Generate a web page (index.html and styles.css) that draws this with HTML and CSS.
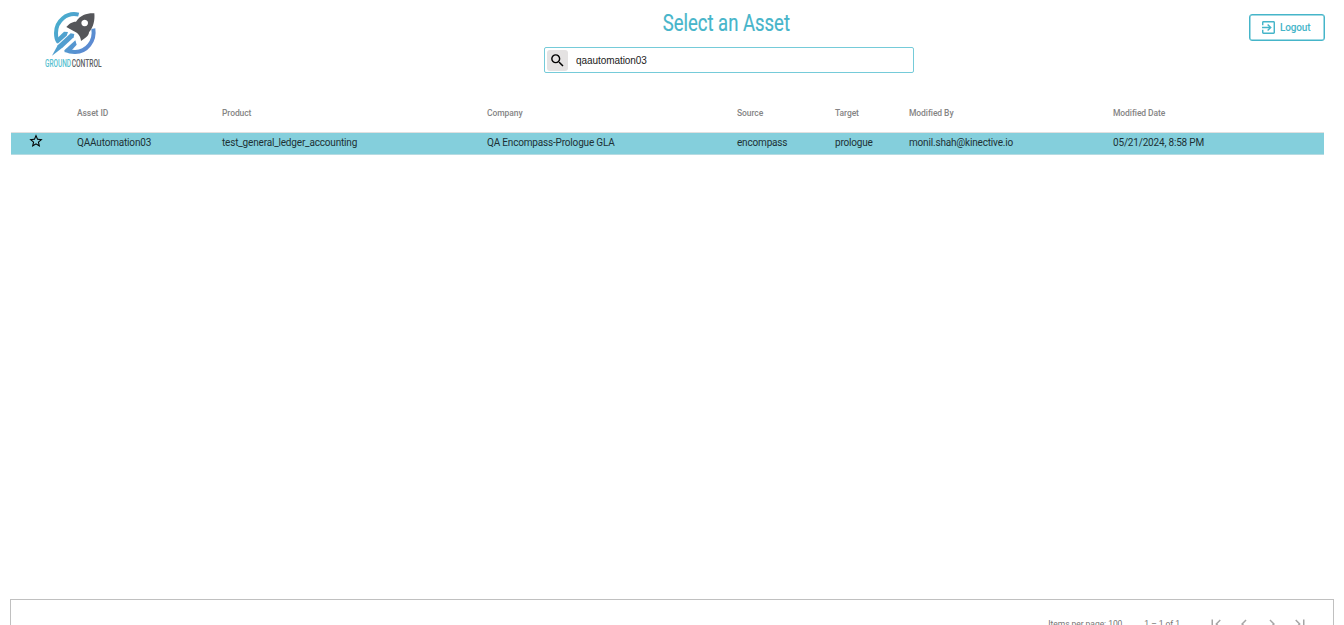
FILE: index.html
```html
<!DOCTYPE html>
<html lang="en">
<head>
  <meta charset="UTF-8" />
  <meta name="viewport" content="width=device-width, initial-scale=1.0"/>
  <title>Ground Control - Select an Asset</title>
  <link rel="stylesheet" href="styles.css">
</head>
<body>
  <div class="page">
    <header class="header">
      <div class="header-side">
        <svg class="logo" viewBox="0 0 240 210" role="img" aria-label="Ground Control">
          <defs>
            <linearGradient id="ring" gradientUnits="userSpaceOnUse" x1="60" y1="50" x2="175" y2="130">
              <stop offset="0" stop-color="#48aecd"/>
              <stop offset="1" stop-color="#5e86d2"/>
            </linearGradient>
          </defs>
          <!-- ring -->
          <g fill="none" stroke="url(#ring)" stroke-width="12">
            <path d="M131 29 C96 20 63 48 63 84 C63 96 65 105 70 111"/>
            <path d="M175 71 C181 108 155 142 119 141 C107 141 99 139 93 136"/>
          </g>
          <!-- trails -->
          <g fill="url(#ring)">
            <path d="M87 80 L99 81 L95 92 L68 116 L62 104 Z"/>
            <path d="M107 85 L118 87 L116 97 L84 127 L51 152 L68 121 Z"/>
            <path d="M121 106 L125 119 L106 140 L89 142 L88 136 Z"/>
          </g>
          <!-- rocket -->
          <path fill="#55565a" fill-rule="evenodd" d="M178 25 C180 45 176 66 162 82 C162 93 149 101 138 108 C137 94 129 84 117 79 L94 66 C102 57 110 50 123 50 C137 29 157 24 178 25 Z M149 44 a10 10 0 1 0 0.1 0 Z"/>
          <text class="logo-ground" x="30" y="186" textLength="78" lengthAdjust="spacingAndGlyphs">GROUND</text>
          <text class="logo-control" x="110" y="186" textLength="90" lengthAdjust="spacingAndGlyphs">CONTROL</text>
        </svg>
      </div>

      <div class="header-main">
        <h1 class="title">Select an Asset</h1>
        <div class="search">
          <button class="search-button" aria-label="Search">
            <svg viewBox="0 0 24 24"><path d="M15.5 14h-.79l-.28-.27A6.47 6.47 0 0 0 16 9.5 6.5 6.5 0 1 0 9.5 16c1.61 0 3.09-.59 4.23-1.57l.27.28v.79l5 4.99L20.49 19l-4.99-5zm-6 0C7.01 14 5 11.99 5 9.5S7.01 5 9.5 5 14 7.01 14 9.5 11.99 14 9.5 14z"/></svg>
          </button>
          <input class="search-input" type="text" value="qaautomation03" aria-label="Search assets" />
        </div>
      </div>

      <div class="header-side header-right">
        <button class="logout">
          <svg viewBox="3 3 18 18"><path d="M10.09 15.59L11.5 17l5-5-5-5-1.41 1.41L12.67 11H3v2h9.67l-2.58 2.59zM19 3H5a2 2 0 0 0-2 2v4h2V5h14v14H5v-4H3v4a2 2 0 0 0 2 2h14c1.1 0 2-.9 2-2V5c0-1.1-.9-2-2-2z"/></svg>
          <span>Logout</span>
        </button>
      </div>
    </header>

    <table class="assets">
      <colgroup>
        <col class="col-star"><col class="col-id"><col class="col-product"><col class="col-company">
        <col class="col-source"><col class="col-target"><col class="col-by"><col class="col-date">
      </colgroup>
      <thead>
        <tr>
          <th></th>
          <th>Asset ID</th>
          <th>Product</th>
          <th>Company</th>
          <th>Source</th>
          <th>Target</th>
          <th>Modified By</th>
          <th>Modified Date</th>
        </tr>
      </thead>
      <tbody>
        <tr>
          <td class="star"><svg viewBox="0 0 24 24"><path d="M22 9.24l-7.19-.62L12 2 9.19 8.63 2 9.24l5.46 4.73L5.82 21 12 17.27 18.18 21l-1.63-7.03L22 9.24zM12 15.4l-3.76 2.27 1-4.28-3.32-2.88 4.38-.38L12 6.1l1.71 4.04 4.38.38-3.32 2.88 1 4.28L12 15.4z"/></svg></td>
          <td>QAAutomation03</td>
          <td>test_general_ledger_accounting</td>
          <td>QA Encompass-Prologue GLA</td>
          <td>encompass</td>
          <td>prologue</td>
          <td>monil.shah@kinective.io</td>
          <td>05/21/2024, 8:58 PM</td>
        </tr>
      </tbody>
    </table>

    <footer class="paginator">
      <span class="page-size">Items per page: 100</span>
      <span class="page-range">1 – 1 of 1</span>
      <div class="page-buttons">
        <svg viewBox="0 0 24 24"><path d="M18.41 16.59L13.82 12l4.59-4.59L17 6l-6 6 6 6zM6 6h2v12H6z"/></svg>
        <svg viewBox="0 0 24 24"><path d="M15.41 7.41L14 6l-6 6 6 6 1.41-1.41L10.83 12z"/></svg>
        <svg viewBox="0 0 24 24"><path d="M10 6L8.59 7.41 13.17 12l-4.58 4.59L10 18l6-6z"/></svg>
        <svg viewBox="0 0 24 24"><path d="M5.59 7.41L10.18 12l-4.59 4.59L7 18l6-6-6-6zM16 6h2v12h-2z"/></svg>
      </div>
    </footer>
  </div>
</body>
</html>
```

FILE: styles.css
```css
* {
  box-sizing: border-box;
}

body {
  margin: 0;
  font-family: Roboto, "Liberation Sans", sans-serif;
  background-color: #fff;
  overflow: hidden;
}

.page {
  display: flex;
  flex-direction: column;
  height: 648px;
  padding: 0 10px 0 11px;
}

.header {
  display: flex;
  height: 93px;
}

.header-side {
  width: 533px;
  padding: 5px 0 0 24px;
}

.logo {
  display: block;
  width: 80px;
  height: 70px;
  overflow: visible;
}

.logo text {
  font-size: 34px;
}

.logo-ground {
  fill: #55bfd0;
  font-weight: 500;
}

.logo-control {
  fill: #5c5d61;
  font-weight: 500;
}

.header-main {
  display: flex;
  flex-direction: column;
  align-items: center;
  width: 370px;
  padding-top: 8px;
}

.title {
  margin: 0 0 9px;
  height: 30px;
  line-height: 30px;
  font-size: 24.5px;
  font-weight: 400;
  color: #47b5ca;
  -webkit-text-stroke: 0.2px #47b5ca;
  white-space: nowrap;
  transform: translateX(-3px) scaleX(0.755);
}

.search {
  display: flex;
  align-items: center;
  width: 370px;
  height: 26px;
  padding-left: 2px;
  border: 1px solid #75cbd9;
  border-radius: 2px;
}

.search-button {
  width: 21px;
  height: 21px;
  padding: 2px;
  border: none;
  border-radius: 3px;
  background-color: #e4e2e2;
}

.search-button svg {
  display: block;
  width: 17px;
  height: 17px;
}

.search-input {
  flex: 1;
  padding: 0 0 0 8px;
  border: none;
  outline: none;
  font-family: "Liberation Sans", Arial, sans-serif;
  font-size: 10px;
  letter-spacing: -0.07px;
  color: #222;
}

.header-right {
  display: flex;
  flex: 1;
  justify-content: flex-end;
  padding: 14px 9px 0 0;
}

.logout {
  display: flex;
  align-items: center;
  gap: 5px;
  width: 76px;
  height: 27px;
  padding: 0 0 1px 12px;
  border: 1px solid #45b5c9;
  border-radius: 3px;
  box-shadow: inset 0 0 0 0.5px #45b5c9;
  background-color: #fff;
  color: #45b5c9;
  font-family: inherit;
  font-size: 10px;
  font-weight: 500;
  letter-spacing: -0.15px;
}

.logout svg {
  width: 13px;
  height: 13px;
  margin-top: 1px;
  fill: currentColor;
}

/* Asset table */
.assets {
  width: 1313px;
  table-layout: fixed;
  border-collapse: collapse;
}

.col-star { width: 66px; }
.col-id { width: 145px; }
.col-product { width: 265px; }
.col-company { width: 250px; }
.col-source { width: 98px; }
.col-target { width: 74px; }
.col-by { width: 204px; }
.col-date { width: 211px; }

.assets th {
  height: 39px;
  padding: 1px 0 0;
  border-bottom: 1px solid #e0e0e0;
  text-align: left;
  font-size: 8.5px;
  font-weight: 500;
  letter-spacing: -0.08px;
  color: #858585;
}

.assets td {
  height: 22px;
  padding: 0 0 1px;
  border-bottom: 1px solid #b5dbe2;
  background-color: #84cfdc;
  font-size: 10px;
  letter-spacing: -0.18px;
  color: #1d3135;
  white-space: nowrap;
}

.assets .star {
  padding-left: 17px;
}

.star svg {
  display: block;
  width: 16px;
  height: 16px;
  margin-top: -3px;
}

/* Paginator */
.paginator {
  display: flex;
  align-items: center;
  height: 49px;
  margin-top: auto;
  margin-left: -1px;
  padding-right: 24px;
  justify-content: flex-end;
  flex-shrink: 0;
  border: 1px solid #c0c0c0;
  font-size: 8.5px;
  letter-spacing: -0.05px;
  color: #757575;
}

.page-range {
  margin: 0 27px 0 22px;
}

.page-buttons {
  display: flex;
  gap: 10px;
}

.page-buttons svg {
  width: 18px;
  height: 18px;
  fill: #a5a5a5;
}
```
